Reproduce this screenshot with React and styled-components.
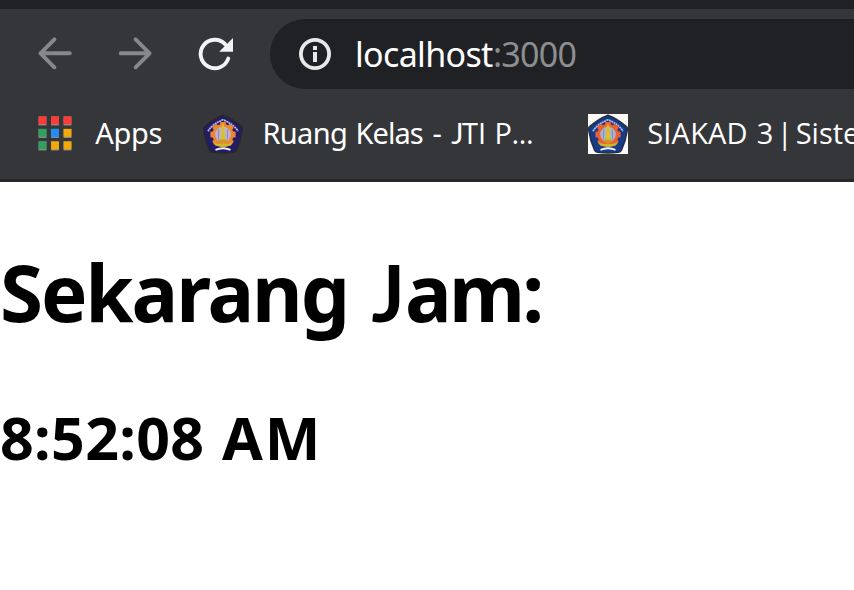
import React from 'react';
import styled, { createGlobalStyle } from 'styled-components';

const GlobalStyle = createGlobalStyle`
  * { box-sizing: border-box; }
  html, body { margin: 0; padding: 0; background: #fff; overflow: hidden; }
  svg { display: block; flex: none; }
`;

const faces = {
  noto: '"Noto Sans", sans-serif',
  open: '"Open Sans", sans-serif',
  lato: 'Lato, sans-serif',
};

const Window = styled.div`
  width: 854px;
  height: 590px;
  display: flex;
  flex-direction: column;
  overflow: hidden;
  background: #fff;
`;

const TabStrip = styled.div`
  height: 9px;
  flex: none;
  background: #202124;
`;

const Chrome = styled.header`
  height: 173px;
  flex: none;
  background: #35363a;
  border-bottom: 3px solid #292829;
`;

const Toolbar = styled.nav`
  display: flex;
  align-items: center;
  height: 90px;
  padding-left: 35px;
`;

const NavButton = styled.button`
  width: 40px;
  height: 40px;
  margin-right: 40px;
  padding: 0;
  border: 0;
  background: none;
  flex: none;

  &:last-of-type { margin-right: 35px; }
`;

const AddressBar = styled.div`
  display: flex;
  align-items: center;
  flex: 1;
  height: 70px;
  padding-left: 25px;
  border-radius: 35px 0 0 35px;
  background: #202124;
`;

const Url = styled.div`
  display: flex;
  margin-left: 20px;
  height: 70px;
  font-size: 34px;
  line-height: 70px;
  color: #fff;
`;

const Word = styled.span`
  display: block;
  flex: none;
  width: ${(p) => p.$w}px;
  font-family: ${(p) => faces[p.$face || 'noto']};
  letter-spacing: ${(p) => p.$track || 0}px;
  white-space: nowrap;
  color: ${(p) => (p.$muted ? '#8d8e90' : 'inherit')};
`;

const Bookmarks = styled.div`
  display: flex;
  height: 40px;
  margin-top: 15px;
  padding-left: 35px;
`;

const Bookmark = styled.a`
  display: flex;
  flex: none;
  width: ${(p) => p.$w}px;
  color: #fff;
`;

const Label = styled.span`
  display: flex;
  height: 40px;
  margin-left: ${(p) => p.$gap}px;
  margin-top: -1px;
  font-size: 29px;
  line-height: 40px;
`;

const Page = styled.main`
  display: flex;
  flex-direction: column;
  color: #000;
`;

const Title = styled.h1`
  display: flex;
  margin: 57px 0 0;
  height: 106px;
  font-size: 78px;
  line-height: 106px;
  font-weight: 700;
`;

const Clock = styled.h2`
  display: flex;
  margin: 52px 0 0;
  height: 80px;
  font-size: 59px;
  line-height: 80px;
  font-weight: 700;
`;

const Arrow = ({ d }) => (
  <svg width="40" height="40" viewBox="0 0 40 40" fill="none" stroke="#87888b" strokeWidth="3.9" strokeLinecap="round" strokeLinejoin="round">
    <path d={d} />
  </svg>
);

const Reload = () => (
  <svg width="40" height="40" viewBox="0 0 40 40">
    <path d="M33.3 24.5A14.2 14.2 0 1 1 30.3 10.4" fill="none" stroke="#f1f3f4" strokeWidth="3.9" strokeLinecap="round" />
    <path d="M38 4v13.8H24.2z" fill="#f1f3f4" />
  </svg>
);

const Info = () => (
  <svg width="40" height="40" viewBox="0 0 40 40">
    <circle cx="20" cy="20" r="14.1" fill="none" stroke="#e8e8e8" strokeWidth="3.8" />
    <path d="M18 12h4v4h-4zM18 18h4v10h-4z" fill="#e8e8e8" />
  </svg>
);

const tiles = [
  ['#fb3b34', '#fb3b34', '#fb3b34'],
  ['#2fa15b', '#1f8dfa', '#f5a806'],
  ['#2fa15b', '#f5a806', '#f5a806'],
];

const AppsIcon = () => (
  <svg width="40" height="40" viewBox="0 0 40 40">
    {tiles.map((row, r) =>
      row.map((fill, c) => (
        <g key={`${r}${c}`} transform={`translate(${3.6 + c * 12.5} ${2.4 + r * 12.5})`}>
          <rect width="7.8" height="9" fill="#929396" />
          <rect width="7.8" height="7.9" fill={fill} />
        </g>
      ))
    )}
  </svg>
);

const teeth = [0, 45, 90, 135, 180, 225, 270, 315];

const Crest = ({ plate, shield, rim, gear, disc }) => (
  <svg width="40" height="40" viewBox="0 0 40 40">
    {plate && <rect width="40" height="40" fill={plate} />}
    <path
      d="M20 1.2Q29.5 4.8 38.4 12.6Q39.8 14 39.2 16.5Q37.8 27 33.4 36.2Q32.5 38 30.5 38.3Q20 39.8 9.5 38.3Q7.5 38 6.6 36.2Q2.2 27 .8 16.5Q.2 14 1.6 12.6Q10.5 4.8 20 1.2z"
      fill={shield}
      stroke={rim}
      strokeWidth="1.6"
    />
    <path d="M5 17.2Q9.5 9.8 20 5.8Q30.5 9.8 35 17.2" fill="none" stroke="#b9b9dc" strokeWidth="1.7" strokeDasharray="2 .5" />
    <g fill={gear}>
      <circle cx="20" cy="20.6" r="10.6" />
      {teeth.map((a) => (
        <rect key={a} x="17" y="8" width="6" height="5" rx="1" transform={`rotate(${a} 20 20.6)`} />
      ))}
    </g>
    <circle cx="20" cy="20.6" r="7.8" fill={disc} />
    <path d="M15.6 15.5v10M24.4 15.5v10" stroke="#7d84b8" strokeWidth=".9" />
    <path d="M20 9l1.4 4 .9 13h-4.6l.9-13z" fill="#dfc024" />
    <path d="M16.5 25.5h7l1.2 3h-9.4z" fill="#c99b25" />
    <path d="M9.5 28Q15 30.8 20 29.6Q25 30.8 30.5 28L27.8 31.6Q20 34.4 12.2 31.6z" fill="#cdb72c" />
    <path d="M12.5 35.8Q20 32.6 27.5 35.8" fill="none" stroke="#eeeef2" strokeWidth="2" />
  </svg>
);

export default function App() {
  return (
    <>
      <GlobalStyle />
      <Window>
        <TabStrip />
        <Chrome>
          <Toolbar>
            <NavButton aria-label="Back">
              <Arrow d="M34.8 19.3H5.5M19.4 5.4L5.5 19.3L19.4 33.3" />
            </NavButton>
            <NavButton aria-label="Forward">
              <Arrow d="M5.7 19.3H34.6M20.6 5.4L34.6 19.3L20.6 33.3" />
            </NavButton>
            <NavButton aria-label="Reload">
              <Reload />
            </NavButton>
            <AddressBar>
              <Info />
              <Url>
                <Word $w={138} $track={-0.67}>localhost</Word>
                <Word $w={90} $track={-0.75} $muted>:3000</Word>
              </Url>
            </AddressBar>
          </Toolbar>
          <Bookmarks>
            <Bookmark $w={168}>
              <AppsIcon />
              <Label $gap={20.3}>
                <Word $w={70} $track={-0.3}>Apps</Word>
              </Label>
            </Bookmark>
            <Bookmark $w={385}>
              <Crest shield="#241b68" rim="#29262d" gear="#ee8530" disc="#b9b4d4" />
              <Label $gap={19.4}>
                <Word $w={93.2} $track={-0.63}>Ruang</Word>
                <Word $w={77} $track={-0.95}>Kelas</Word>
                <Word $w={18.6}>-</Word>
                <Word $w={10.9} $face="lato">J</Word>
                <Word $w={32.5} $face="open">TI</Word>
                <Word $w={40} $track={-0.4} $face="open">P...</Word>
              </Label>
            </Bookmark>
            <Bookmark $w={270}>
              <Crest plate="#fbfbf8" shield="#173b85" rim="#28304a" gear="#ec602f" disc="#aab5d2" />
              <Label $gap={19.2}>
                <Word $w={109.5} $track={0.2} $face="open">SIAKAD</Word>
                <Word $w={20} $face="open">3</Word>
                <Word $w={19} $face="open">|</Word>
                <Word $w={70} $face="open">Siste</Word>
              </Label>
            </Bookmark>
          </Bookmarks>
        </Chrome>
        <Page>
          <Title>
            <Word $w={371.5} $track={-2.1}>Sekarang</Word>
            <Word $w={33.5} $face="lato">J</Word>
            <Word $w={150} $track={-2.7}>am:</Word>
          </Title>
          <Clock>
            <Word $w={222} $track={0.35}>8:52:08</Word>
            <Word $w={110} $track={2}>AM</Word>
          </Clock>
        </Page>
      </Window>
    </>
  );
}
